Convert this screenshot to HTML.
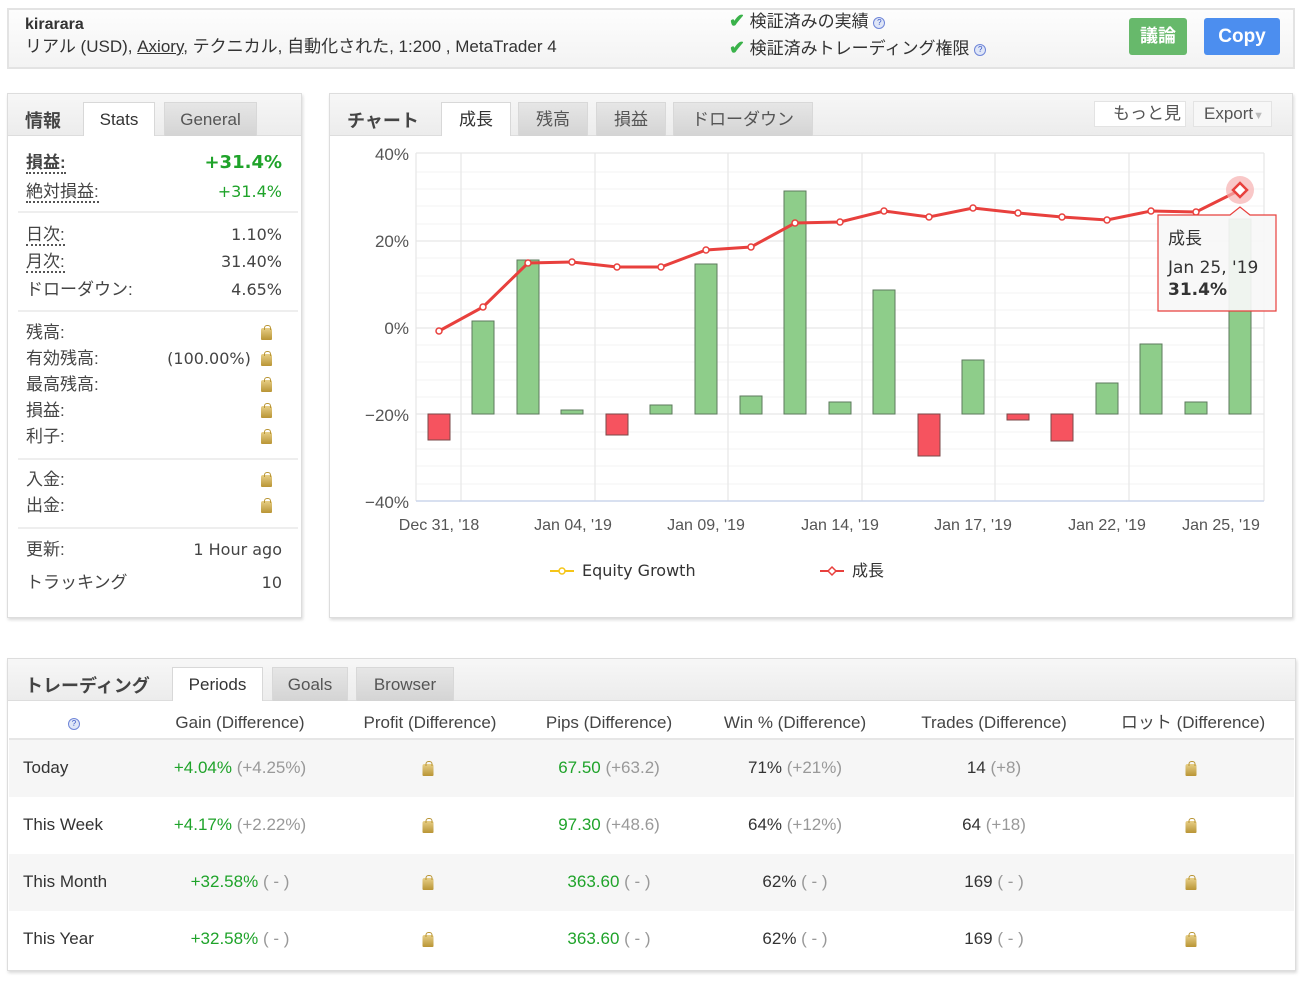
<!DOCTYPE html>
<html><head><meta charset="utf-8">
<style>
*{box-sizing:border-box;margin:0;padding:0}
body{width:1304px;height:982px;background:#fff;font-family:"Liberation Sans","Noto Sans CJK JP",sans-serif;color:#333;position:relative;overflow:hidden}
.abs{position:absolute}
.panel{position:absolute;border:1px solid #ddd;background:#fff;box-shadow:1px 2px 3px rgba(0,0,0,.15)}
.hdr{position:absolute;left:0;right:0;top:0;background:linear-gradient(#f7f7f7,#ececec);border-bottom:1px solid #ddd}
.tab{position:absolute;font-size:17px;color:#555;text-align:center;border:1px solid #d8d8d8;border-bottom:none;background:linear-gradient(#e6e6e6,#d4d4d4)}
.tab.on{background:#fff;color:#333}
.lock{display:inline-block;width:11px;height:12px;background:linear-gradient(#e7cf87,#b99535);border-radius:2px 2px 1px 1px;position:relative;vertical-align:middle}
.lock:before{content:"";position:absolute;left:3px;top:-3px;width:5px;height:4px;border:1px solid #b99535;border-bottom:none;border-radius:3px 3px 0 0}
.row{position:absolute;left:26px;width:256px;font-size:17px;color:#444;line-height:20px;height:22px}
.row .r{position:absolute;right:0;top:0;font-family:"DejaVu Sans",sans-serif;font-size:16px}
.g{color:#1fa32a}
.q{display:inline-block;width:12px;height:12px;border-radius:50%;background:#dfe6f7;border:1px solid #6f86d8;font-size:8px;color:#3957c6;text-align:center;line-height:10px;vertical-align:middle}
.dot{border-bottom:2px dotted #555}
.sep{position:absolute;left:18px;width:280px;height:2px;background:#eee}
.tr{position:absolute;left:9px;width:1285px;height:57px;font-size:17px}
.tr div{position:absolute;top:18px;line-height:20px;transform:translateX(-50%);white-space:nowrap}
.gr{color:#999}
</style></head><body>

<!-- top bar -->
<div class="panel" style="left:7px;top:8px;width:1288px;height:61px;background:linear-gradient(#fdfdfd,#f3f3f3);box-shadow:none;border:2px solid #e3e3e3">
  <div class="abs" style="left:16px;top:5px;font-size:16px;font-weight:bold;color:#333;line-height:20px">kirarara</div>
  <div class="abs" style="left:16px;top:27px;font-size:17px;color:#333;line-height:20px">リアル (USD), <u>Axiory</u>, テクニカル, 自動化された, 1:200 , MetaTrader 4</div>
  <div class="abs" style="left:720px;top:2px;font-size:17px;color:#333;line-height:20px"><span style="color:#3ab24a;font-weight:bold;font-size:19px">✔</span> 検証済みの実績 <span class="q">?</span></div>
  <div class="abs" style="left:720px;top:29px;font-size:17px;color:#333;line-height:20px"><span style="color:#3ab24a;font-weight:bold;font-size:19px">✔</span> 検証済みトレーディング権限 <span class="q">?</span></div>
  <div class="abs" style="left:1120px;top:8px;width:58px;height:37px;background:#67b96b;border-radius:3px;color:#fff;font-weight:bold;font-size:18px;text-align:center;line-height:37px">議論</div>
  <div class="abs" style="left:1195px;top:8px;width:76px;height:37px;background:#4c8eef;border-radius:3px;color:#fff;font-weight:bold;font-size:19px;text-align:center;line-height:37px">Copy</div>
</div>

<!-- info panel -->
<div class="panel" style="left:7px;top:93px;width:295px;height:525px">
  <div class="hdr" style="height:42px"></div>
  <div class="abs" style="left:17px;top:13px;font-size:18px;font-weight:bold;color:#444">情報</div>
  <div class="tab on" style="left:75px;top:8px;width:72px;height:34px;line-height:34px">Stats</div>
  <div class="tab" style="left:156px;top:8px;width:93px;height:34px;line-height:34px">General</div>
</div>
<div class="row" style="top:153px"><b class="dot" style="color:#444">損益:</b><span class="r g" style="font-weight:bold;font-size:18px">+31.4%</span></div>
<div class="row" style="top:182px"><span class="dot">絶対損益:</span><span class="r g">+31.4%</span></div>
<div class="sep" style="top:211px"></div>
<div class="row" style="top:225px"><span class="dot">日次:</span><span class="r">1.10%</span></div>
<div class="row" style="top:252px"><span class="dot">月次:</span><span class="r">31.40%</span></div>
<div class="row" style="top:280px">ドローダウン:<span class="r">4.65%</span></div>
<div class="sep" style="top:310px"></div>
<div class="row" style="top:323px">残高:<span class="r" style="right:10px"><i class="lock"></i></span></div>
<div class="row" style="top:349px">有効残高:<span class="r" style="right:10px">(100.00%)&nbsp;&nbsp;<i class="lock"></i></span></div>
<div class="row" style="top:375px">最高残高:<span class="r" style="right:10px"><i class="lock"></i></span></div>
<div class="row" style="top:401px">損益:<span class="r" style="right:10px"><i class="lock"></i></span></div>
<div class="row" style="top:427px">利子:<span class="r" style="right:10px"><i class="lock"></i></span></div>
<div class="sep" style="top:458px"></div>
<div class="row" style="top:470px">入金:<span class="r" style="right:10px"><i class="lock"></i></span></div>
<div class="row" style="top:496px">出金:<span class="r" style="right:10px"><i class="lock"></i></span></div>
<div class="sep" style="top:527px"></div>
<div class="row" style="top:540px">更新:<span class="r">1 Hour ago</span></div>
<div class="row" style="top:573px">トラッキング<span class="r">10</span></div>

<!-- chart panel -->
<div class="panel" style="left:329px;top:93px;width:964px;height:525px">
  <div class="hdr" style="height:42px"></div>
  <div class="abs" style="left:17px;top:13px;font-size:18px;font-weight:bold;color:#444">チャート</div>
  <div class="tab on" style="left:111px;top:8px;width:70px;height:34px;line-height:34px">成長</div>
  <div class="tab" style="left:188px;top:8px;width:70px;height:34px;line-height:34px">残高</div>
  <div class="tab" style="left:266px;top:8px;width:70px;height:34px;line-height:34px">損益</div>
  <div class="tab" style="left:343px;top:8px;width:140px;height:34px;line-height:34px">ドローダウン</div>
  <div class="abs" style="left:764px;top:7px;width:92px;height:26px;background:#fff;border:1px solid #e3e3e3;font-size:17px;color:#555;text-align:right;padding-right:4px;line-height:24px">もっと見</div>
  <div class="abs" style="left:863px;top:7px;width:79px;height:26px;background:#f7f7f7;border:1px solid #e3e3e3;font-size:17px;color:#555;padding-left:10px;line-height:24px">Export<span style="color:#bbb;font-size:11px">▼</span></div>
</div>

<svg class="abs" style="left:0;top:0" width="1304" height="620">
 <g stroke="#f3f3f3" stroke-width="1">
  <line x1="416" x2="1264" y1="172" y2="172"/><line x1="416" x2="1264" y1="189" y2="189"/><line x1="416" x2="1264" y1="206" y2="206"/><line x1="416" x2="1264" y1="224" y2="224"/>
  <line x1="416" x2="1264" y1="258" y2="258"/><line x1="416" x2="1264" y1="276" y2="276"/><line x1="416" x2="1264" y1="293" y2="293"/><line x1="416" x2="1264" y1="310" y2="310"/>
  <line x1="416" x2="1264" y1="345" y2="345"/><line x1="416" x2="1264" y1="362" y2="362"/><line x1="416" x2="1264" y1="380" y2="380"/><line x1="416" x2="1264" y1="397" y2="397"/>
  <line x1="416" x2="1264" y1="432" y2="432"/><line x1="416" x2="1264" y1="449" y2="449"/><line x1="416" x2="1264" y1="466" y2="466"/><line x1="416" x2="1264" y1="484" y2="484"/>
 </g>
 <g stroke="#e6e6e6" stroke-width="1.2">
  <line x1="416" x2="1264" y1="153" y2="153"/><line x1="416" x2="1264" y1="241" y2="241"/><line x1="416" x2="1264" y1="328" y2="328"/><line x1="416" x2="1264" y1="414" y2="414"/>
  <line x1="416" x2="416" y1="153" y2="501"/><line x1="1264" x2="1264" y1="153" y2="501"/>
  <line x1="461" x2="461" y1="153" y2="501"/><line x1="595" x2="595" y1="153" y2="501"/><line x1="728" x2="728" y1="153" y2="501"/><line x1="862" x2="862" y1="153" y2="501"/><line x1="995" x2="995" y1="153" y2="501"/><line x1="1129" x2="1129" y1="153" y2="501"/>
 </g>
 <line x1="416" x2="1264" y1="501" y2="501" stroke="#ccd6eb" stroke-width="1.5"/>
 <g font-size="17" fill="#555" text-anchor="end">
  <text x="409" y="160">40%</text><text x="409" y="247">20%</text><text x="409" y="334">0%</text><text x="409" y="421">−20%</text><text x="409" y="508">−40%</text>
 </g>
 <g font-size="16" fill="#555" text-anchor="middle">
  <text x="439" y="530">Dec 31, '18</text><text x="573" y="530">Jan 04, '19</text><text x="706" y="530">Jan 09, '19</text><text x="840" y="530">Jan 14, '19</text><text x="973" y="530">Jan 17, '19</text><text x="1107" y="530">Jan 22, '19</text><text x="1221" y="530">Jan 25, '19</text>
 </g>
 <g stroke="#5d7a5d" stroke-width="1" fill="#8ecd8a">
  <rect x="472" y="321" width="22" height="93"/><rect x="517" y="260" width="22" height="154"/><rect x="561" y="410" width="22" height="4"/>
  <rect x="650" y="405" width="22" height="9"/><rect x="695" y="264" width="22" height="150"/><rect x="740" y="396" width="22" height="18"/>
  <rect x="784" y="191" width="22" height="223"/><rect x="829" y="402" width="22" height="12"/><rect x="873" y="290" width="22" height="124"/>
  <rect x="962" y="360" width="22" height="54"/><rect x="1096" y="383" width="22" height="31"/><rect x="1140" y="344" width="22" height="70"/>
  <rect x="1185" y="402" width="22" height="12"/><rect x="1229" y="219" width="22" height="195"/>
 </g>
 <g stroke="#7a4a4a" stroke-width="1" fill="#f6535f">
  <rect x="428" y="414" width="22" height="26"/><rect x="606" y="414" width="22" height="21"/><rect x="918" y="414" width="22" height="42"/><rect x="1007" y="414" width="22" height="6"/><rect x="1051" y="414" width="22" height="27"/>
 </g>
 <polyline fill="none" stroke="#e8403d" stroke-width="3" points="439,331 483,307 528,263 572,262 617,267 661,267 706,250 751,247 795,223 840,222 884,211 929,217 973,208 1018,213 1062,217 1107,220 1151,211 1196,212 1240,190"/>
 <circle cx="1240" cy="190" r="14" fill="#f6b0b0" opacity=".7"/>
 <g fill="#fff" stroke="#e8403d" stroke-width="1.5">
  <circle cx="439" cy="331" r="3"/><circle cx="483" cy="307" r="3"/><circle cx="528" cy="263" r="3"/><circle cx="572" cy="262" r="3"/><circle cx="617" cy="267" r="3"/><circle cx="661" cy="267" r="3"/><circle cx="706" cy="250" r="3"/><circle cx="751" cy="247" r="3"/><circle cx="795" cy="223" r="3"/><circle cx="840" cy="222" r="3"/><circle cx="884" cy="211" r="3"/><circle cx="929" cy="217" r="3"/><circle cx="973" cy="208" r="3"/><circle cx="1018" cy="213" r="3"/><circle cx="1062" cy="217" r="3"/><circle cx="1107" cy="220" r="3"/><circle cx="1151" cy="211" r="3"/><circle cx="1196" cy="212" r="3"/>
 </g>
 <polygon points="1240,183 1247,190 1240,197 1233,190" fill="#fff" stroke="#e8403d" stroke-width="2.5"/>
 <path d="M1158,215 H1230 L1240,207 L1250,215 H1276 V311 H1158 Z" fill="#f7f7f7" fill-opacity=".92" stroke="#e8403d" stroke-width="1.2"/>
 <text x="1168" y="244" font-size="17" fill="#333">成長</text>
 <text x="1168" y="273" font-size="17" fill="#333" font-family="DejaVu Sans">Jan 25, '19</text>
 <text x="1168" y="295" font-size="17" fill="#333" font-weight="bold" font-family="DejaVu Sans">31.4%</text>
 <line x1="550" x2="574" y1="571" y2="571" stroke="#f5c518" stroke-width="2"/><circle cx="562" cy="571" r="3" fill="#fff" stroke="#f5c518" stroke-width="1.5"/>
 <text x="582" y="576" font-size="16" fill="#333" font-family="DejaVu Sans">Equity Growth</text>
 <line x1="820" x2="844" y1="571" y2="571" stroke="#e8403d" stroke-width="2"/><polygon points="832,567 836,571 832,575 828,571" fill="#fff" stroke="#e8403d" stroke-width="1.5"/>
 <text x="852" y="576" font-size="16" fill="#333">成長</text>
</svg>

<!-- trading panel -->
<div class="panel" style="left:7px;top:658px;width:1289px;height:313px">
  <div class="hdr" style="height:42px"></div>
  <div class="abs" style="left:17px;top:13px;font-size:18px;font-weight:bold;color:#444">トレーディング</div>
  <div class="tab on" style="left:164px;top:8px;width:91px;height:34px;line-height:34px">Periods</div>
  <div class="tab" style="left:264px;top:8px;width:76px;height:34px;line-height:34px">Goals</div>
  <div class="tab" style="left:348px;top:8px;width:98px;height:34px;line-height:34px">Browser</div>
</div>
<div class="tr" style="top:700px;height:40px;border-bottom:2px solid #e6e6e6;color:#444">
  <div style="left:65px;top:13px"><span class="q">?</span></div>
  <div style="left:231px;top:13px">Gain (Difference)</div>
  <div style="left:421px;top:13px">Profit (Difference)</div>
  <div style="left:600px;top:13px">Pips (Difference)</div>
  <div style="left:786px;top:13px">Win % (Difference)</div>
  <div style="left:985px;top:13px">Trades (Difference)</div>
  <div style="left:1184px;top:13px">ロット (Difference)</div>
</div>
<div class="tr" style="top:740px;background:#f6f6f6">
  <div style="left:14px;transform:none">Today</div>
  <div style="left:231px"><span class="g">+4.04%</span> <span class="gr">(+4.25%)</span></div>
  <div style="left:419px;top:19px"><i class="lock"></i></div>
  <div style="left:600px"><span class="g">67.50</span> <span class="gr">(+63.2)</span></div>
  <div style="left:786px">71% <span class="gr">(+21%)</span></div>
  <div style="left:985px">14 <span class="gr">(+8)</span></div>
  <div style="left:1182px;top:19px"><i class="lock"></i></div>
</div>
<div class="tr" style="top:797px">
  <div style="left:14px;transform:none">This Week</div>
  <div style="left:231px"><span class="g">+4.17%</span> <span class="gr">(+2.22%)</span></div>
  <div style="left:419px;top:19px"><i class="lock"></i></div>
  <div style="left:600px"><span class="g">97.30</span> <span class="gr">(+48.6)</span></div>
  <div style="left:786px">64% <span class="gr">(+12%)</span></div>
  <div style="left:985px">64 <span class="gr">(+18)</span></div>
  <div style="left:1182px;top:19px"><i class="lock"></i></div>
</div>
<div class="tr" style="top:854px;background:#f6f6f6">
  <div style="left:14px;transform:none">This Month</div>
  <div style="left:231px"><span class="g">+32.58%</span> <span class="gr">( - )</span></div>
  <div style="left:419px;top:19px"><i class="lock"></i></div>
  <div style="left:600px"><span class="g">363.60</span> <span class="gr">( - )</span></div>
  <div style="left:786px">62% <span class="gr">( - )</span></div>
  <div style="left:985px">169 <span class="gr">( - )</span></div>
  <div style="left:1182px;top:19px"><i class="lock"></i></div>
</div>
<div class="tr" style="top:911px">
  <div style="left:14px;transform:none">This Year</div>
  <div style="left:231px"><span class="g">+32.58%</span> <span class="gr">( - )</span></div>
  <div style="left:419px;top:19px"><i class="lock"></i></div>
  <div style="left:600px"><span class="g">363.60</span> <span class="gr">( - )</span></div>
  <div style="left:786px">62% <span class="gr">( - )</span></div>
  <div style="left:985px">169 <span class="gr">( - )</span></div>
  <div style="left:1182px;top:19px"><i class="lock"></i></div>
</div>
</body></html>
